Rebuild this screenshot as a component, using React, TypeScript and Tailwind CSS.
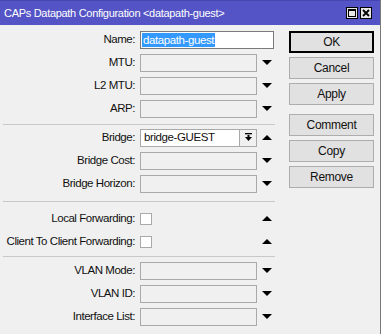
import React from "react";

const font = { fontFamily: '"Liberation Sans", Arial, sans-serif' };

function DownArrow() {
  return (
    <svg width="10" height="6" viewBox="0 0 10 6" className="block">
      <polygon points="0,0 10,0 5,5" fill="#000" />
    </svg>
  );
}

function UpArrow() {
  return (
    <svg width="10" height="6" viewBox="0 0 10 6" className="block">
      <polygon points="0,5 10,5 5,0" fill="#000" />
    </svg>
  );
}

function Label({ children }: { children: React.ReactNode }) {
  return (
    <div className="w-[136px] shrink-0 pr-[1px] text-right text-[11.5px] tracking-[-0.45px] text-[#111] whitespace-nowrap leading-none">
      {children}
    </div>
  );
}

function FieldRow({ label, arrow = "down" }: { label: string; arrow?: "down" | "up" }) {
  return (
    <div className="flex h-[23px] items-center">
      <Label>{label}</Label>
      <div className="ml-[4px] h-[18px] w-[117px] border border-[#a9a9a9] bg-[#f0f0f0]" />
      <div className="ml-[5px] w-[10px]">{arrow === "down" ? <DownArrow /> : <UpArrow />}</div>
    </div>
  );
}

function CheckRow({ label }: { label: string }) {
  return (
    <div className="flex h-[23px] items-center">
      <Label>{label}</Label>
      <div className="ml-[4px] h-[12px] w-[12px] border border-[#a9a9a9] bg-white" />
      <div className="ml-[110px] w-[10px]">
        <UpArrow />
      </div>
    </div>
  );
}

function Sep({ className = "" }: { className?: string }) {
  return <div className={`ml-[3px] h-px w-[272px] bg-[#c8c8c8] ${className}`} />;
}

function Btn({ children, primary = false }: { children: React.ReactNode; primary?: boolean }) {
  return (
    <div
      className={`flex h-[22px] w-[85px] items-center justify-center text-[12px] tracking-[-0.3px] text-[#111] ${
        primary ? "border border-black bg-[#e1e1e1] shadow-[inset_0_0_0_1px_#000]" : "border border-[#adadad] bg-[#e1e1e1]"
      }`}
    >
      {children}
    </div>
  );
}

export default function App() {
  return (
    <div className="h-[334px] w-[382px] overflow-hidden bg-white" style={font}>
      <div className="flex h-full w-[381px] flex-col border-r border-[#7a7a7a] bg-[#f0f0f0]">
        {/* title bar */}
        <div className="flex h-[25px] shrink-0 items-center justify-between border-t border-[#4646b0] bg-[#5454c6] pl-[4px] pr-[8px]">
          <span className="text-[11px] tracking-[-0.3px] text-white whitespace-nowrap">
            CAPs Datapath Configuration &lt;datapath-guest&gt;
          </span>
          <div className="flex gap-[2px]">
            <div className="flex h-[12px] w-[12px] items-center justify-center border border-black bg-[#e8e8e8]">
              <div className="h-[8px] w-[8px] border border-black border-t-2" />
            </div>
            <div className="flex h-[12px] w-[12px] items-center justify-center border border-black bg-[#e8e8e8]">
              <svg width="8" height="8" viewBox="0 0 8 8">
                <path d="M1 1 L7 7 M7 1 L1 7" stroke="#000" strokeWidth="1.8" />
              </svg>
            </div>
          </div>
        </div>

        <div className="flex flex-1">
          {/* form */}
          <div className="w-[282px] pt-[3px]">
            <div className="flex h-[23px] items-center">
              <Label>Name:</Label>
              <div className="ml-[4px] flex h-[18px] w-[134px] items-center border border-[#7a7a7a] bg-white pl-[1px]">
                <span className="bg-[#3399ff] px-[1px] text-[11.5px] leading-[14px] tracking-[-0.4px] text-white">datapath-guest</span>
              </div>
            </div>
            <FieldRow label="MTU:" />
            <FieldRow label="L2 MTU:" />
            <FieldRow label="ARP:" />
            <Sep className="mt-[4px] mb-[1px]" />
            <div className="flex h-[23px] items-center">
              <Label>Bridge:</Label>
              <div className="ml-[4px] flex h-[18px] w-[100px] items-center border border-[#a9a9a9] bg-white pl-[3px] text-[11.5px] tracking-[-0.4px] text-[#111]">
                bridge-GUEST
              </div>
              <div className="flex h-[18px] w-[17px] items-center justify-center border border-l-0 border-[#a9a9a9] bg-[#f0f0f0]">
                <svg width="9" height="9" viewBox="0 0 9 9">
                  <rect x="1" y="0" width="7" height="1.3" fill="#000" />
                  <polygon points="1,4 8,4 4.5,8" fill="#000" />
                  <rect x="3.5" y="2" width="2" height="2.5" fill="#000" />
                </svg>
              </div>
              <div className="ml-[5px] w-[10px]">
                <UpArrow />
              </div>
            </div>
            <FieldRow label="Bridge Cost:" />
            <FieldRow label="Bridge Horizon:" />
            <Sep className="mt-[6px] mb-[5px]" />
            <CheckRow label="Local Forwarding:" />
            <CheckRow label="Client To Client Forwarding:" />
            <Sep className="mt-[3px] mb-[2px]" />
            <FieldRow label="VLAN Mode:" />
            <FieldRow label="VLAN ID:" />
            <FieldRow label="Interface List:" />
          </div>

          {/* buttons */}
          <div className="ml-[7px] flex flex-col pt-[6px]">
            <div className="flex flex-col gap-[4px]">
              <Btn primary>OK</Btn>
              <Btn>Cancel</Btn>
              <Btn>Apply</Btn>
            </div>
            <div className="mt-[9px] flex flex-col gap-[4px]">
              <Btn>Comment</Btn>
              <Btn>Copy</Btn>
              <Btn>Remove</Btn>
            </div>
          </div>
        </div>
      </div>
    </div>
  );
}
